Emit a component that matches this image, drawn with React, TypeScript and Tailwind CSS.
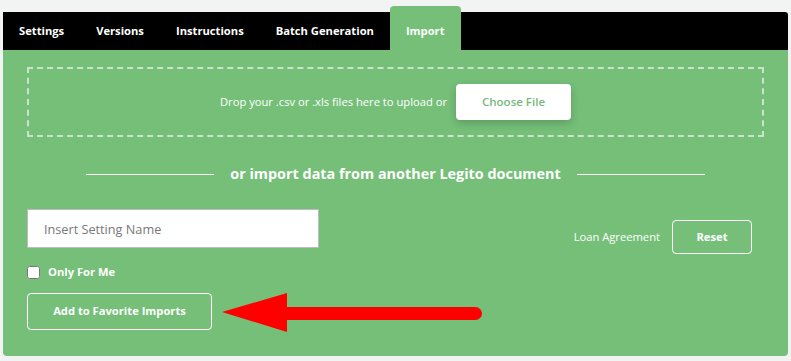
import { useState } from "react";

const tabs = ["Settings", "Versions", "Instructions", "Batch Generation", "Import"];

export default function App() {
  const [onlyMe, setOnlyMe] = useState(false);

  return (
    <div
      className="relative h-[361px] w-[791px] overflow-hidden bg-[#f2f4f3] px-[3px] pt-[12px]"
      style={{ fontFamily: '"Open Sans", "Noto Sans", sans-serif' }}
    >
      <nav className="flex h-[38px] items-end rounded-tr-[3px] bg-black">
        {tabs.map((tab) => {
          const active = tab === "Import";
          return (
            <div
              key={tab}
              className={
                active
                  ? "flex h-[44px] items-center rounded-t-[4px] bg-[#75bf79] px-4 pt-[6px] text-[11.2px] font-bold text-white"
                  : "flex h-[38px] items-center px-4 text-[11.2px] font-bold text-white"
              }
            >
              {tab}
            </div>
          );
        })}
      </nav>

      <section className="h-[306px] rounded-b-[4px] bg-[#75bf79] px-6 pt-[17px]">
        <div className="flex h-[70px] items-center justify-center gap-[9px] border-2 border-dashed border-white/60">
          <span className="text-[11.2px] text-white">Drop your .csv or .xls files here to upload or</span>
          <button className="h-[36px] w-[115px] rounded-[4px] bg-white text-[11.5px] font-semibold text-[#78b87c] shadow-[0_3px_8px_rgba(0,0,0,0.2)]">
            Choose File
          </button>
        </div>

        <div className="mt-[28px] flex h-[18px] items-center justify-center gap-4">
          <span className="h-px w-[128px] bg-white" />
          <span className="text-[14.4px] font-bold text-white">or import data from another Legito document</span>
          <span className="h-px w-[128px] bg-white" />
        </div>

        <div className="mt-[26px] flex items-start justify-between">
          <div className="flex flex-col">
            <input
              placeholder="Insert Setting Name"
              className="h-[39px] w-[292px] border border-[#bdbdbd] bg-white px-4 text-[12.7px] text-[#555] outline-none placeholder:text-[#777]"
            />
            <label className="mt-[16px] flex h-[16px] items-center gap-[8px] text-[11.2px] font-bold text-white">
              <input
                type="checkbox"
                checked={onlyMe}
                onChange={(e) => setOnlyMe(e.target.checked)}
                className="h-[13px] w-[13px] accent-white"
              />
              Only For Me
            </label>
            <button className="mt-[13px] h-[37px] w-[185px] rounded-[4px] border border-white text-[11.2px] font-bold text-white">
              Add to Favorite Imports
            </button>
          </div>

          <div className="mt-[11px] flex items-center gap-[12px] pr-[12px]">
            <span className="text-[11.2px] text-white">Loan Agreement</span>
            <button className="h-[34px] w-[80px] rounded-[4px] border border-white text-[11.2px] font-bold text-white">
              Reset
            </button>
          </div>
        </div>
      </section>

      <svg className="pointer-events-none absolute left-0 top-0" width="791" height="361" viewBox="0 0 791 361">
        <polygon points="222,312 287,293 287,332" fill="#ff0000" />
        <line x1="280" y1="313.5" x2="475.5" y2="313.5" stroke="#ff0000" strokeWidth="13" strokeLinecap="round" />
      </svg>
    </div>
  );
}
